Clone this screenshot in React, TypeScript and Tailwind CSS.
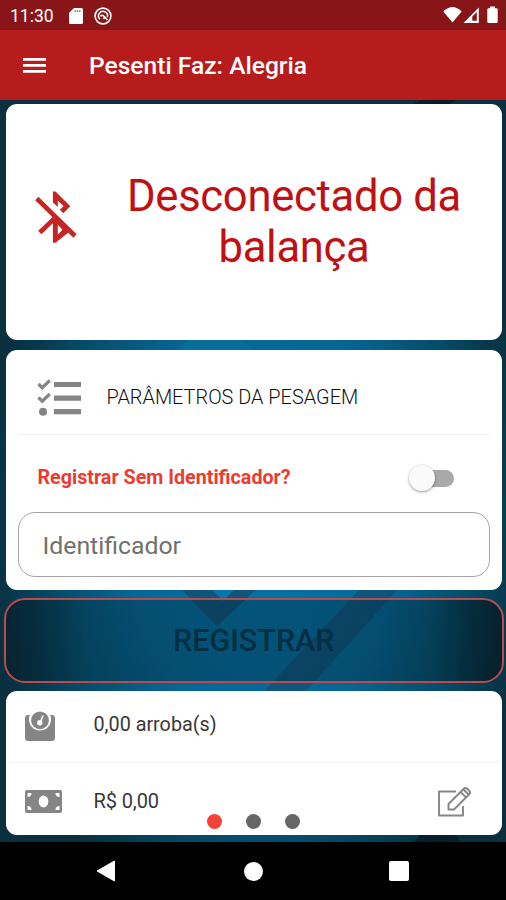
import React from "react";

function Backdrop() {
  return (
    <svg className="absolute inset-0" width="506" height="742" viewBox="0 100 506 742" aria-hidden="true">
      <defs>
        <radialGradient id="glow" gradientUnits="userSpaceOnUse" cx="0" cy="0" r="1" gradientTransform="translate(262 520) scale(275 425)">
          <stop offset="0" stopColor="#0577ab" />
          <stop offset="0.5" stopColor="#066694" />
          <stop offset="0.78" stopColor="#064a67" />
          <stop offset="0.93" stopColor="#07374b" />
          <stop offset="1" stopColor="#0a303f" />
        </radialGradient>
      </defs>
      <rect x="0" y="100" width="506" height="742" fill="url(#glow)" />
      <path d="M420 100H456L450 104H414ZM414 842H460L456 835H420Z" fill="#06202b" />
      <path d="M178 350 188 340H242L252 350Z" fill="#08729d" opacity="0.6" />
      <path d="M178 586 217 626 260 586Z" fill="#154c6e" opacity="0.75" />
      <path d="M209 586H238L223 601Z" fill="#0478ab" />
      <path d="M363 586H401L306 691H264Z" fill="#154b70" opacity="0.65" />
    </svg>
  );
}

function StatusBar() {
  return (
    <div className="flex h-[30px] items-center bg-[#881517] pl-[10px] pr-[8px] text-white">
      <span className="w-[44px] whitespace-nowrap pt-[3px] text-[17.500px] leading-none">11:30</span>
      <svg className="ml-[15px] mt-px" width="14" height="16" viewBox="0 0 14 16">
        <path d="M5 0H12.500Q14 0 14 1.500V14.500Q14 16 12.500 16H1.500Q0 16 0 14.500V5Z" fill="#fff" />
        <path d="M5.500 3.200H12" stroke="#b76a6b" strokeWidth="1.800" strokeDasharray="1.500 0.800" />
      </svg>
      <svg className="ml-[11px] mt-px" width="18" height="18" viewBox="0 0 18 18" fill="none" stroke="#fff">
        <circle cx="9" cy="9" r="7.900" strokeWidth="1.600" />
        <path d="M6 12.200A4.500 4.500 0 1 1 13.300 10.200" strokeWidth="1.500" />
        <path d="M6.300 9.300Q8.200 7.500 10 9.300Q10.800 10.500 9.500 12M10 9.300 13.500 13" strokeWidth="1.500" />
      </svg>
      <svg className="ml-auto" width="56" height="20" viewBox="442 5 56 20" fill="#fff">
        <path d="M443.300 11.500Q452.500 2.500 461.700 11.500L452.500 22.500Z" />
        <path d="M478.800 7.500V23H463.500ZM476.800 12 472.300 16.500V20.800H476.800Z" fillRule="evenodd" />
        <path d="M490 6.500H495V8.200H496.500Q497.700 8.200 497.700 9.500V21.700Q497.700 23 496.500 23H488.500Q487.300 23 487.300 21.700V9.500Q487.300 8.200 488.500 8.200H490Z" />
      </svg>
    </div>
  );
}

function AppBar() {
  return (
    <header className="flex h-[70px] items-center bg-[#b71c1c] pl-[23px] text-white">
      <svg width="23" height="17" viewBox="0 0 23 17" fill="none" stroke="#fff" strokeWidth="2.700">
        <path d="M0 2.300H23M0 8.300H23M0 14.300H23" />
      </svg>
      <h1 className="ml-[43px] whitespace-nowrap pt-[2px] text-[24.600px] font-medium leading-none">Pesenti Faz: Alegria</h1>
    </header>
  );
}

function ConnectionCard() {
  return (
    <section className="flex h-[236px] items-center rounded-[11px] bg-white">
      <svg className="ml-[29px] mt-[-10px] shrink-0" width="42" height="54" viewBox="35 190 42 54" fill="none" stroke="#c62525" strokeWidth="4.600">
        <path d="M36.800 198.500 75 236M39.800 232.500 55 218" />
        <path d="M52.900 191.500H55.500L70.300 206.300 63.300 213.200 59.800 209.800 63.600 206.300 57.800 200.500V207L52.900 202.600Z" fill="#c62525" stroke="none" />
        <path d="M52.900 217H57.800L70 231.200 55.500 242.700H52.900ZM57.800 224.800V234.500L62.500 229.700Z" fill="#c62525" fillRule="evenodd" stroke="none" />
      </svg>
      <p className="ml-[22px] w-[391px] text-center text-[43.600px] leading-[51px] tracking-[-0.300px] text-[#c01012]">Desconectado da balança</p>
    </section>
  );
}

function ChecklistIcon() {
  return (
    <svg width="44" height="38" viewBox="37 379 44 38" fill="none" stroke="#858585">
      <path d="M38.500 384 42.200 387.700 49.800 380.500M38.500 397.500 42.200 401.200 49.800 394" strokeWidth="3.200" />
      <path d="M54 384.500H81M54 398.200H81M54 411.700H81" strokeWidth="5.200" />
      <circle cx="43" cy="411.700" r="4" fill="#858585" stroke="none" />
    </svg>
  );
}

function ParametersCard() {
  return (
    <section className="mt-[10px] h-[240px] rounded-[11px] bg-white px-[12px]">
      <div className="flex h-[85px] items-center border-b border-[#f0f0f0] pl-[19px] pt-[12px]">
        <ChecklistIcon />
        <h2 className="ml-[26px] whitespace-nowrap text-[19.900px] font-light leading-none text-[#101010]">PARÂMETROS DA PESAGEM</h2>
      </div>
      <div className="flex h-[77px] items-center justify-between pl-[20px] pr-[36px] pt-[9px]">
        <span className="whitespace-nowrap text-[19.700px] font-bold leading-none text-[#ec3b31]">Registrar Sem Identificador?</span>
        <div className="flex h-[26px] w-[45px] items-center">
          <span className="z-10 size-[26px] shrink-0 rounded-full bg-[#fafafa] shadow-[0_1px_3px_rgba(0,0,0,0.4)]" />
          <span className="-ml-[16px] h-[17px] w-[35px] shrink-0 rounded-full bg-[#a9a9a9]" />
        </div>
      </div>
      <div className="flex h-[65px] items-center rounded-[17px] border border-[#a5a5a5] pl-[24px] pt-[3px] text-[24.800px] text-[#707070]">Identificador</div>
    </section>
  );
}

function ScaleIcon() {
  return (
    <svg width="30" height="31" viewBox="25 711 30 31">
      <path d="M28 715H30A11 11 0 1 0 50 715H52Q55 715 55 718V738Q55 741 52 741H28Q25 741 25 738V718Q25 715 28 715Z" fill="#858585" />
      <path d="M29.600 716A10.700 10.700 0 1 0 50.400 716L49 716A9.500 9.500 0 0 1 31 716Z" fill="#fff" />
      <circle cx="40" cy="720.300" r="8.900" fill="#858585" />
      <path d="M43 715.500 40.600 721.500" stroke="#fff" strokeWidth="1.500" />
      <circle cx="39.800" cy="722.800" r="2.700" fill="#fff" />
    </svg>
  );
}

function CashIcon() {
  return (
    <svg width="37" height="23" viewBox="0 0 37 23">
      <rect width="37" height="23" rx="2" fill="#858585" />
      <ellipse cx="18.500" cy="11.500" rx="4.800" ry="6" fill="#fff" />
      <path d="M2.500 3H6.500Q6.500 7 2.500 7ZM34.500 3H30.500Q30.500 7 34.500 7ZM2.500 20H6.500Q6.500 16 2.500 16ZM34.500 20H30.500Q30.500 16 34.500 16Z" fill="#fff" />
    </svg>
  );
}

function EditIcon() {
  return (
    <svg width="34" height="31" viewBox="437 786 34 31" fill="none" stroke="#858585" strokeWidth="1.900" strokeLinejoin="round">
      <path d="M456 791.500H439V815.500H463V806" />
      <path d="M448.500 809.500V804L463.500 789Q465.500 787 467.500 789L469 790.500Q471 792.500 469 794.500L454 809.500ZM460.500 792 466.200 797.700M463.500 789.500 468.500 794.500" />
    </svg>
  );
}

function TotalsCard() {
  return (
    <section className="relative mt-[8px] h-[144px] rounded-[11px] bg-white">
      <div className="mx-[2px] flex h-[72px] items-center border-b border-[#f3f4f6] pl-[17px]">
        <ScaleIcon />
        <span className="mb-[3px] ml-[39px] whitespace-nowrap text-[19.800px] leading-none text-[#383838]">0,00 arroba(s)</span>
      </div>
      <div className="flex h-[72px] items-center pl-[19px] pr-[31px] pt-[5px]">
        <CashIcon />
        <span className="mb-[2px] ml-[32px] whitespace-nowrap text-[20px] leading-none tracking-[-0.100px] text-[#383838]">R$ 0,00</span>
        <span className="ml-auto"><EditIcon /></span>
      </div>
      <div className="absolute bottom-[6px] left-[201px] flex gap-[24.300px]">
        <span className="size-[15px] rounded-full bg-[#f44336]" />
        <span className="size-[15px] rounded-full bg-[#666666]" />
        <span className="size-[15px] rounded-full bg-[#666666]" />
      </div>
    </section>
  );
}

function NavigationBar() {
  return (
    <nav className="flex h-[58px] items-center bg-black pl-[96px]">
      <svg width="20" height="22" viewBox="0 0 20 22"><path d="M1 11 18.500 1V21Z" fill="#fff" stroke="#fff" strokeLinejoin="round" /></svg>
      <span className="ml-[128px] size-[19px] rounded-full bg-white" />
      <span className="ml-[126px] size-[20px] rounded-[2px] bg-white" />
    </nav>
  );
}

export default function App() {
  return (
    <div className="h-[900px] w-[506px] overflow-hidden font-['Roboto',sans-serif]">
      <StatusBar />
      <AppBar />
      <div className="relative h-[742px] border-b border-[#456675] bg-[#073142]">
        <Backdrop />
        <main className="relative pl-[5.500px] pr-[4px] pt-[4px]">
          <ConnectionCard />
          <ParametersCard />
          <button className="-ml-[2px] mt-[8px] flex h-[85px] w-[500.500px] items-center justify-center rounded-[21px] border-2 border-[#b94b4e] bg-[linear-gradient(90deg,#061e29b3_0%,#01253559_16%,#00202e59_30%,#00202e59_75%,#01202c66_86%,#061a23cc_100%)] text-[30.500px] font-medium text-[#032f42]">REGISTRAR</button>
          <TotalsCard />
        </main>
      </div>
      <NavigationBar />
    </div>
  );
}
